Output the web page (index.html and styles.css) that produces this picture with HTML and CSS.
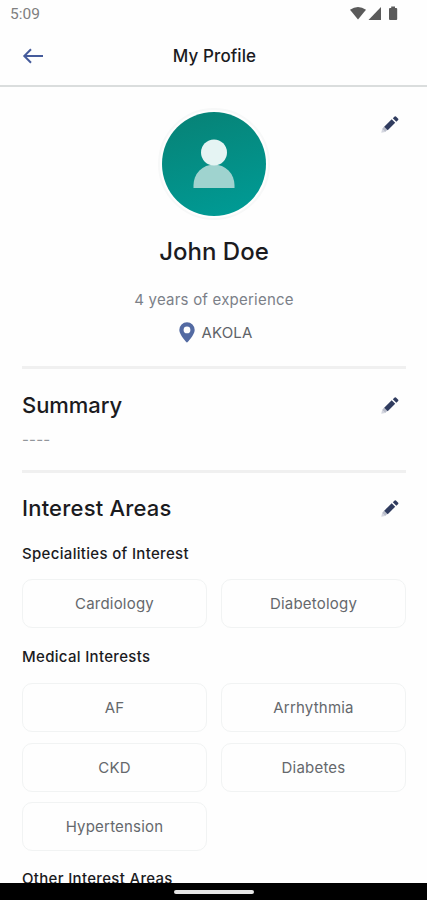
FILE: index.html
```html
<!DOCTYPE html>
<html lang="en">
<head>
<meta charset="utf-8">
<title>My Profile</title>
<link rel="stylesheet" href="styles.css">
</head>
<body>
<svg class="defs" aria-hidden="true">
  <symbol id="pencil" viewBox="0 0 20 20">
    <path d="M1.300 18.700 2.100 14.900 5.100 17.900Z" fill="#d3d5df"/>
    <path d="M2.100 14.900 4.200 12.500 7.500 15.800 5.100 17.900Z" fill="#b9bdca"/>
    <path d="M4.200 12.700 11.700 5.200 15.200 8.700 7.700 16.200Z" fill="#303c5f"/>
    <path d="M12.800 4.200 14.700 2.400Q15.300 1.900 15.900 2.400L18.200 4.700Q18.700 5.300 18.200 5.900L16.300 7.700Z" fill="#303c5f"/>
  </symbol>
</svg>
<div class="screen">
  <div class="status">
    <span class="time">5:09</span>
    <svg class="status-icons" viewBox="0 0 50 16" fill="#5a5a5a">
      <path d="M0 3.800Q8 -1.800 16 3.800L8 13.500Z"/>
      <path d="M31 1V14H18.500Z"/>
      <path d="M39 3Q39 2 40 2H41.200V.5H45V2H46.200Q47.200 2 47.200 3V13Q47.200 14 46.200 14H40Q39 14 39 13Z"/>
    </svg>
  </div>
  <header class="header">
    <svg class="back" viewBox="0 0 22 18" fill="none" stroke="#455b9b" stroke-width="2"><path d="M21 9H2.500M9 2.300 2.300 9l6.700 6.700"/></svg>
    <h1 class="title">My Profile</h1>
  </header>
  <main class="content">
    <section class="profile">
      <div class="avatar-ring"><svg class="avatar" viewBox="0 0 104 104">
        <defs><linearGradient id="teal" x1="0.300" y1="0" x2="0.600" y2="1"><stop offset="0" stop-color="#078377"/><stop offset="1" stop-color="#009a94"/></linearGradient></defs>
        <circle cx="52" cy="52" r="52" fill="url(#teal)"/>
        <path d="M31.500 76v-3a20.500 20.500 0 0 1 41 0v3z" fill="#9fd3cf"/>
        <circle cx="52" cy="40.500" r="13" fill="#e5f4f3"/>
      </svg></div>
      <svg class="pencil pencil-top"><use href="#pencil"/></svg>
      <h2 class="name">John Doe</h2>
      <p class="experience">4 years of experience</p>
      <p class="place"><svg class="pin" viewBox="0 0 16 21"><path fill="#536aa2" fill-rule="evenodd" d="M8 .3A7.700 7.700 0 0 0 .3 8C.3 13 8 20.700 8 20.700S15.700 13 15.700 8A7.700 7.700 0 0 0 8 .3ZM8 4.500a3.400 3.400 0 1 1 0 6.800 3.400 3.400 0 0 1 0-6.800Z"/></svg><span class="city">AKOLA</span></p>
    </section>
    <section class="summary">
      <div class="section-head"><h2 class="heading heading-summary">Summary</h2><svg class="pencil"><use href="#pencil"/></svg></div>
      <p class="dashes">----</p>
    </section>
    <section class="interests">
      <div class="section-head"><h2 class="heading heading-interests">Interest Areas</h2><svg class="pencil"><use href="#pencil"/></svg></div>
      <h3 class="sub sub-spec">Specialities of Interest</h3>
      <div class="chips">
        <div class="chip">Cardiology</div><div class="chip">Diabetology</div>
      </div>
      <h3 class="sub sub-med">Medical Interests</h3>
      <div class="chips">
        <div class="chip">AF</div><div class="chip">Arrhythmia</div>
        <div class="chip">CKD</div><div class="chip">Diabetes</div>
        <div class="chip">Hypertension</div>
      </div>
      <h3 class="sub sub-other">Other Interest Areas</h3>
    </section>
  </main>
  <div class="navbar"><div class="handle"></div></div>
</div>
</body>
</html>
```
FILE: styles.css
```css
* { box-sizing: border-box; }
body { margin: 0; background: #fefefe; font-family: Inter, sans-serif; color: #1b1b1e; }
h1, h2, h3, p { margin: 0; }
.defs { position: absolute; width: 0; height: 0; }
.screen { display: flex; flex-direction: column; height: 900px; overflow: hidden; }
.status { flex: none; height: 28px; display: flex; justify-content: space-between; padding: 6px 27px 0 10px; }
.time { font: 400 15.500px/17px Roboto, sans-serif; color: #808080; }
.status-icons { width: 50px; height: 16px; }
.header { flex: none; height: 59px; padding-bottom: 2px; border-bottom: 2px solid #dadddd; display: grid; grid-template-columns: 44px 1fr 42px; align-items: center; }
.back { width: 22px; height: 18px; margin-left: 22px; }
.title { text-align: center; font-size: 17px; font-weight: 500; line-height: 22px; letter-spacing: .1px; }
.content { flex: 1; min-height: 0; overflow: hidden; padding: 0 21px 0 22px; }
.profile { position: relative; height: 282px; padding-top: 21px; border-bottom: 3px solid #f0f0f0; text-align: center; }
.avatar-ring { width: 112px; height: 112px; margin: 0 auto; padding: 2px; border-radius: 50%; border: 2px solid #f7f8f8; }
.avatar { display: block; width: 104px; height: 104px; }
.pencil { width: 20px; height: 20px; flex: none; }
.pencil-top { position: absolute; top: 27px; right: 6px; }
.name { margin-top: 16px; font-size: 24px; font-weight: 500; line-height: 32px; }
.experience { margin-top: 22px; font-size: 15px; line-height: 20px; letter-spacing: .22px; color: #7b8088; }
.place { display: flex; justify-content: center; align-items: center; gap: 6px; margin-top: 11px; padding-left: 4px; height: 23px; }
.pin { width: 16px; height: 21px; }
.city { font-size: 15px; letter-spacing: .2px; color: #606368; }
.summary { height: 104px; padding-top: 20px; border-bottom: 3px solid #f0f0f0; }
.section-head { display: flex; justify-content: space-between; align-items: center; height: 32px; padding-right: 6px; }
.heading { font-size: 22px; font-weight: 500; line-height: 32px; }
.heading-summary { letter-spacing: -.05px; }
.heading-interests { letter-spacing: .2px; }
.dashes { margin-top: 9px; font-size: 15px; line-height: 20px; letter-spacing: .2px; color: #92969b; }
.interests { padding-top: 19px; }
.sub { font-size: 15px; font-weight: 500; line-height: 20px; letter-spacing: .32px; }
.sub-spec { margin-top: 20px; }
.sub-med { margin-top: 19px; }
.sub-other { margin-top: 18px; }
.chips { display: grid; grid-template-columns: 1fr 1fr; gap: 10.600px 14px; margin-top: 15px; }
.sub-med + .chips { margin-top: 16px; }
.chip { height: 49px; border: 1.500px solid #f1f3f3; border-radius: 10px; display: flex; align-items: center; justify-content: center; font-size: 15px; letter-spacing: .2px; color: #65686c; }
.navbar { flex: none; height: 17px; background: #000; display: flex; justify-content: center; padding-top: 7px; }
.handle { width: 80px; height: 4px; border-radius: 2px; background: #e6e6e6; }
```
